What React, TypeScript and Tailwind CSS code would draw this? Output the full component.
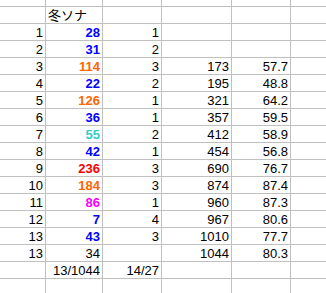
import React from 'react';

type Cell = { v: string; c?: string; bold?: boolean; left?: boolean };

const blue = 'text-[#0000ff]';
const orange = 'text-[#ff6600]';
const teal = 'text-[#33cccc]';
const red = 'text-[#ff0000]';
const pink = 'text-[#ff00ff]';

const rows: Cell[][] = [
  [{ v: '' }, { v: '' }, { v: '' }, { v: '' }, { v: '' }, { v: '' }],
  [{ v: '' }, { v: '冬ソナ', left: true }, { v: '' }, { v: '' }, { v: '' }, { v: '' }],
  [{ v: '1' }, { v: '28', c: blue, bold: true }, { v: '1' }, { v: '' }, { v: '' }, { v: '' }],
  [{ v: '2' }, { v: '31', c: blue, bold: true }, { v: '2' }, { v: '' }, { v: '' }, { v: '' }],
  [{ v: '3' }, { v: '114', c: orange, bold: true }, { v: '3' }, { v: '173' }, { v: '57.7' }, { v: '' }],
  [{ v: '4' }, { v: '22', c: blue, bold: true }, { v: '2' }, { v: '195' }, { v: '48.8' }, { v: '' }],
  [{ v: '5' }, { v: '126', c: orange, bold: true }, { v: '1' }, { v: '321' }, { v: '64.2' }, { v: '' }],
  [{ v: '6' }, { v: '36', c: blue, bold: true }, { v: '1' }, { v: '357' }, { v: '59.5' }, { v: '' }],
  [{ v: '7' }, { v: '55', c: teal, bold: true }, { v: '2' }, { v: '412' }, { v: '58.9' }, { v: '' }],
  [{ v: '8' }, { v: '42', c: blue, bold: true }, { v: '1' }, { v: '454' }, { v: '56.8' }, { v: '' }],
  [{ v: '9' }, { v: '236', c: red, bold: true }, { v: '3' }, { v: '690' }, { v: '76.7' }, { v: '' }],
  [{ v: '10' }, { v: '184', c: orange, bold: true }, { v: '3' }, { v: '874' }, { v: '87.4' }, { v: '' }],
  [{ v: '11' }, { v: '86', c: pink, bold: true }, { v: '1' }, { v: '960' }, { v: '87.3' }, { v: '' }],
  [{ v: '12' }, { v: '7', c: blue, bold: true }, { v: '4' }, { v: '967' }, { v: '80.6' }, { v: '' }],
  [{ v: '13' }, { v: '43', c: blue, bold: true }, { v: '3' }, { v: '1010' }, { v: '77.7' }, { v: '' }],
  [{ v: '13' }, { v: '34' }, { v: '' }, { v: '1044' }, { v: '80.3' }, { v: '' }],
  [{ v: '' }, { v: '13/1044' }, { v: '14/27' }, { v: '' }, { v: '' }, { v: '' }],
  [{ v: '' }, { v: '' }, { v: '' }, { v: '' }, { v: '' }, { v: '' }],
];

export default function App() {
  return (
    <div className="w-[326px] h-[293px] overflow-hidden bg-white">
      <div
        className="grid grid-cols-[45px_56px_58px_69px_58px_40px] grid-rows-[6px] auto-rows-[16px] gap-px bg-[#c0c0c0] text-[13px] leading-[16px] text-black"
        style={{ fontFamily: '"Liberation Sans", "Noto Sans CJK JP", sans-serif' }}
      >
        {rows.map((row, ri) =>
          row.map((cell, ci) => (
            <div
              key={`${ri}-${ci}`}
              className={`bg-white overflow-hidden whitespace-nowrap px-[2px] pt-[1px] ${cell.left ? 'text-left' : 'text-right'} ${cell.c ?? ''} ${cell.bold ? 'font-bold' : ''}`}
            >
              {cell.v}
            </div>
          ))
        )}
      </div>
    </div>
  );
}
